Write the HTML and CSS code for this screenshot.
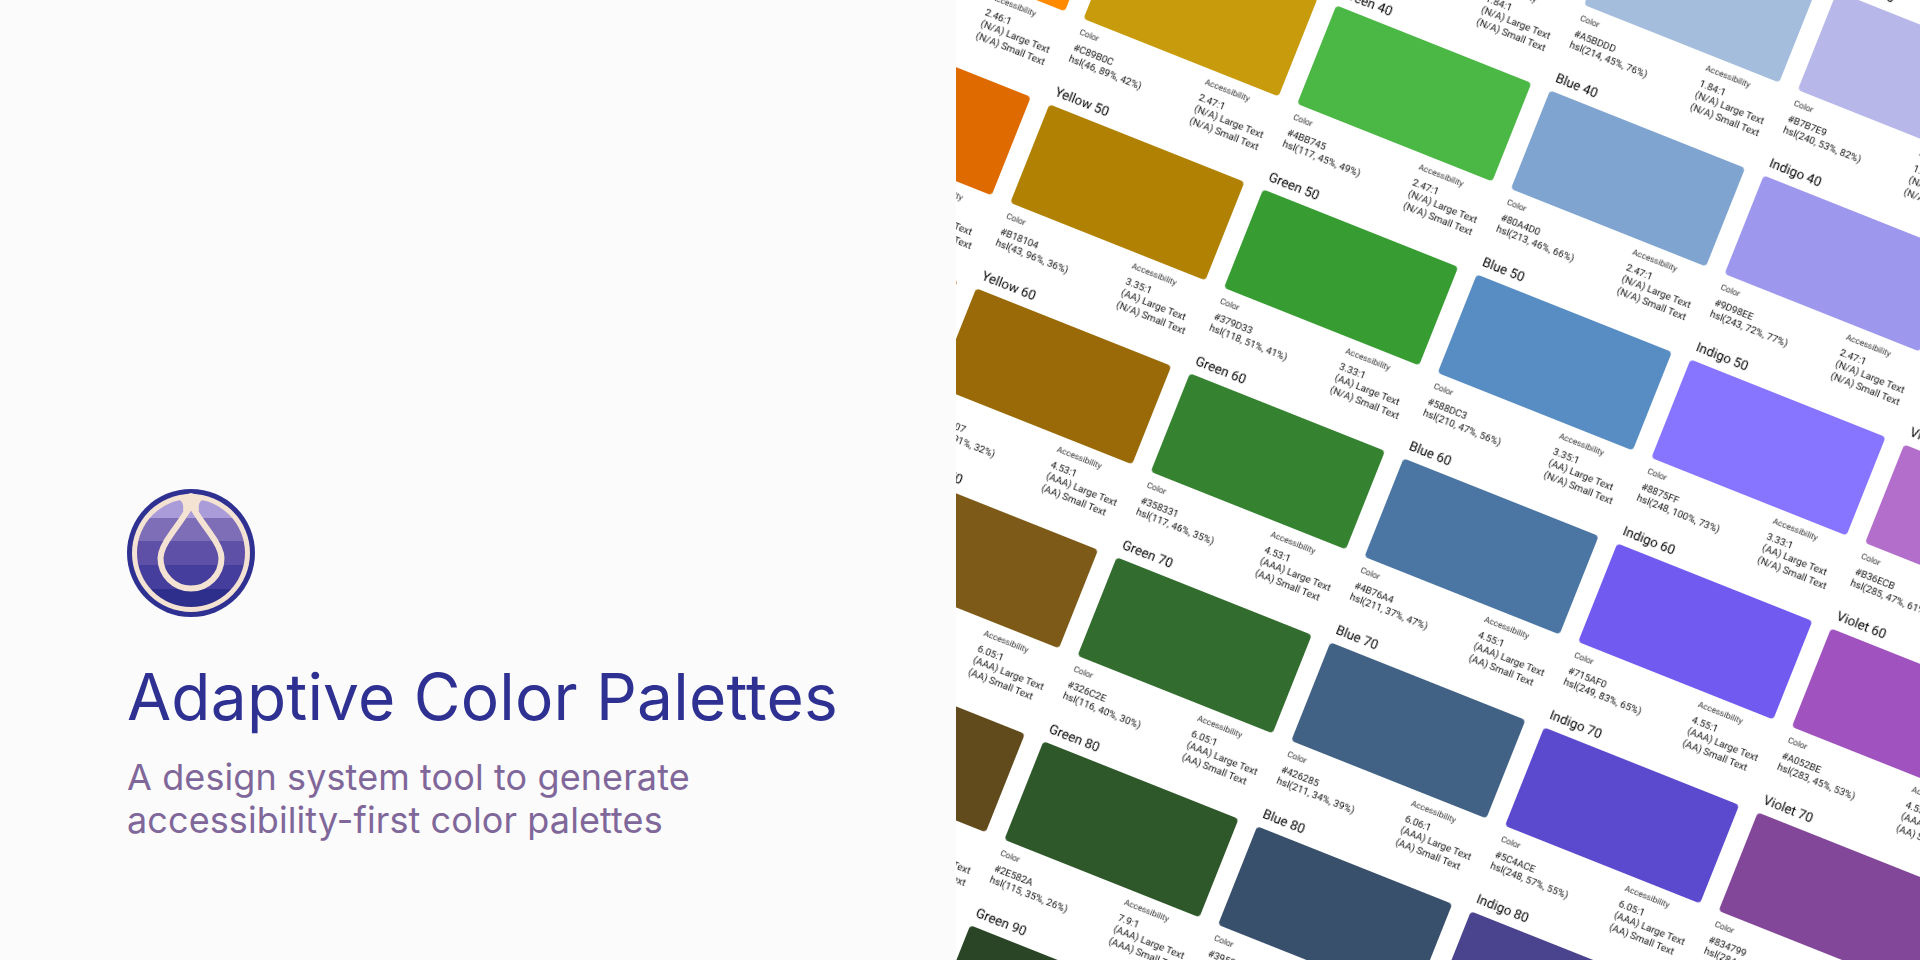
FILE: index.html
```html
<!DOCTYPE html>
<html lang="en">
<head>
<meta charset="utf-8">
<title>Adaptive Color Palettes</title>
<link rel="stylesheet" href="styles.css">
</head>
<body>
<main class="page">
  <section class="intro">
    <svg class="logo" viewBox="0 0 128 128" width="128" height="128" aria-hidden="true">
      <defs><clipPath id="disc"><circle cx="64" cy="64" r="54"/></clipPath></defs>
      <circle cx="64" cy="64" r="64" fill="#2E3192"/>
      <circle cx="64" cy="64" r="59" fill="#F4E3D3"/>
      <g clip-path="url(#disc)">
        <rect x="0" y="0" width="128" height="29" fill="#A99CD8"/>
        <rect x="0" y="29" width="128" height="23" fill="#7E6EB7"/>
        <rect x="0" y="52" width="128" height="24" fill="#5E50A6"/>
        <rect x="0" y="76" width="128" height="24" fill="#453E9C"/>
        <rect x="0" y="100" width="128" height="28" fill="#2E2E8C"/>
      </g>
      <path d="M64 15C60 24 52 34 45 44C37 55 33.5 62 33.5 69A30.5 30.5 0 0 0 94.5 69C94.5 62 91 55 83 44C76 34 68 24 64 15Z" fill="none" stroke="#F4E3D3" stroke-width="6" stroke-linejoin="round"/>
      <path d="M46 9C55 10 57 14 56 22L72 22C71 14 73 10 82 9L64 4Z" fill="#F4E3D3"/>
    </svg>
    <h1 class="title">Adaptive Color Palettes</h1>
    <p class="subtitle">A design system tool to generate<br>accessibility-first color palettes</p>
  </section>
  <section class="canvas">
    <div class="sheet">
      <!-- row 30 -->
      <div></div><div></div>
      <article class="card"><h3>Green 30</h3><div class="swatch" style="background:#79CB74"></div><div class="info"><p><span>Color</span>#79CB74<br>hsl(116, 46%, 63%)</p><p><span>Accessibility</span>1.84:1<br>(N/A) Large Text<br>(N/A) Small Text</p></div></article>
      <article class="card"><h3>Blue 30</h3><div class="swatch" style="background:#A5BDDD"></div><div class="info"><p><span>Color</span>#A5BDDD<br>hsl(214, 45%, 76%)</p><p><span>Accessibility</span>1.84:1<br>(N/A) Large Text<br>(N/A) Small Text</p></div></article>
      <article class="card"><h3>Indigo 30</h3><div class="swatch" style="background:#B7B7E9"></div><div class="info"><p><span>Color</span>#B7B7E9<br>hsl(240, 53%, 82%)</p><p><span>Accessibility</span>1.84:1<br>(N/A) Large Text<br>(N/A) Small Text</p></div></article>
      <div></div>
      <!-- row 40 -->
      <article class="card"><h3>Orange 40</h3><div class="swatch" style="background:#FF8A00"></div><div class="info"><p><span>Color</span>#FF8A00<br>hsl(32, 100%, 50%)</p><p><span>Accessibility</span>2.46:1<br>(N/A) Large Text<br>(N/A) Small Text</p></div></article>
      <article class="card"><h3>Yellow 40</h3><div class="swatch" style="background:#C89B0C"></div><div class="info"><p><span>Color</span>#C89B0C<br>hsl(46, 89%, 42%)</p><p><span>Accessibility</span>2.47:1<br>(N/A) Large Text<br>(N/A) Small Text</p></div></article>
      <article class="card"><h3>Green 40</h3><div class="swatch" style="background:#4BB745"></div><div class="info"><p><span>Color</span>#4BB745<br>hsl(117, 45%, 49%)</p><p><span>Accessibility</span>2.47:1<br>(N/A) Large Text<br>(N/A) Small Text</p></div></article>
      <article class="card"><h3>Blue 40</h3><div class="swatch" style="background:#80A4D0"></div><div class="info"><p><span>Color</span>#80A4D0<br>hsl(213, 46%, 66%)</p><p><span>Accessibility</span>2.47:1<br>(N/A) Large Text<br>(N/A) Small Text</p></div></article>
      <article class="card"><h3>Indigo 40</h3><div class="swatch" style="background:#9D98EE"></div><div class="info"><p><span>Color</span>#9D98EE<br>hsl(243, 72%, 77%)</p><p><span>Accessibility</span>2.47:1<br>(N/A) Large Text<br>(N/A) Small Text</p></div></article>
      <div></div>
      <!-- row 50 -->
      <article class="card"><h3>Orange 50</h3><div class="swatch" style="background:#DF6A00"></div><div class="info"><p><span>Color</span>#DF6A00<br>hsl(29, 100%, 44%)</p><p><span>Accessibility</span>3.35:1<br>(AA) Large Text<br>(N/A) Small Text</p></div></article>
      <article class="card"><h3>Yellow 50</h3><div class="swatch" style="background:#B18104"></div><div class="info"><p><span>Color</span>#B18104<br>hsl(43, 96%, 36%)</p><p><span>Accessibility</span>3.35:1<br>(AA) Large Text<br>(N/A) Small Text</p></div></article>
      <article class="card"><h3>Green 50</h3><div class="swatch" style="background:#379D33"></div><div class="info"><p><span>Color</span>#379D33<br>hsl(118, 51%, 41%)</p><p><span>Accessibility</span>3.33:1<br>(AA) Large Text<br>(N/A) Small Text</p></div></article>
      <article class="card"><h3>Blue 50</h3><div class="swatch" style="background:#588DC3"></div><div class="info"><p><span>Color</span>#588DC3<br>hsl(210, 47%, 56%)</p><p><span>Accessibility</span>3.35:1<br>(AA) Large Text<br>(N/A) Small Text</p></div></article>
      <article class="card"><h3>Indigo 50</h3><div class="swatch" style="background:#8875FF"></div><div class="info"><p><span>Color</span>#8875FF<br>hsl(248, 100%, 73%)</p><p><span>Accessibility</span>3.33:1<br>(AA) Large Text<br>(N/A) Small Text</p></div></article>
      <article class="card"><h3>Violet 50</h3><div class="swatch" style="background:#B36ECB"></div><div class="info"><p><span>Color</span>#B36ECB<br>hsl(285, 47%, 61%)</p><p><span>Accessibility</span>3.33:1<br>(AA) Large Text<br>(N/A) Small Text</p></div></article>
      <!-- row 60 -->
      <article class="card"><h3>Orange 60</h3><div class="swatch" style="background:#C25700"></div><div class="info"><p><span>Color</span>#C25700<br>hsl(27, 100%, 38%)</p><p><span>Accessibility</span>4.53:1<br>(AAA) Large Text<br>(AA) Small Text</p></div></article>
      <article class="card"><h3>Yellow 60</h3><div class="swatch" style="background:#996A07"></div><div class="info"><p><span>Color</span>#996A07<br>hsl(41, 91%, 32%)</p><p><span>Accessibility</span>4.53:1<br>(AAA) Large Text<br>(AA) Small Text</p></div></article>
      <article class="card"><h3>Green 60</h3><div class="swatch" style="background:#358331"></div><div class="info"><p><span>Color</span>#358331<br>hsl(117, 46%, 35%)</p><p><span>Accessibility</span>4.53:1<br>(AAA) Large Text<br>(AA) Small Text</p></div></article>
      <article class="card"><h3>Blue 60</h3><div class="swatch" style="background:#4B76A4"></div><div class="info"><p><span>Color</span>#4B76A4<br>hsl(211, 37%, 47%)</p><p><span>Accessibility</span>4.55:1<br>(AAA) Large Text<br>(AA) Small Text</p></div></article>
      <article class="card"><h3>Indigo 60</h3><div class="swatch" style="background:#715AF0"></div><div class="info"><p><span>Color</span>#715AF0<br>hsl(249, 83%, 65%)</p><p><span>Accessibility</span>4.55:1<br>(AAA) Large Text<br>(AA) Small Text</p></div></article>
      <article class="card"><h3>Violet 60</h3><div class="swatch" style="background:#A052BE"></div><div class="info"><p><span>Color</span>#A052BE<br>hsl(283, 45%, 53%)</p><p><span>Accessibility</span>4.55:1<br>(AAA) Large Text<br>(AA) Small Text</p></div></article>
      <!-- row 70 -->
      <div></div>
      <article class="card"><h3>Yellow 70</h3><div class="swatch" style="background:#7D5A17"></div><div class="info"><p><span>Color</span>#7D5A17<br>hsl(40, 69%, 29%)</p><p><span>Accessibility</span>6.05:1<br>(AAA) Large Text<br>(AA) Small Text</p></div></article>
      <article class="card"><h3>Green 70</h3><div class="swatch" style="background:#326C2E"></div><div class="info"><p><span>Color</span>#326C2E<br>hsl(116, 40%, 30%)</p><p><span>Accessibility</span>6.05:1<br>(AAA) Large Text<br>(AA) Small Text</p></div></article>
      <article class="card"><h3>Blue 70</h3><div class="swatch" style="background:#426285"></div><div class="info"><p><span>Color</span>#426285<br>hsl(211, 34%, 39%)</p><p><span>Accessibility</span>6.06:1<br>(AAA) Large Text<br>(AA) Small Text</p></div></article>
      <article class="card"><h3>Indigo 70</h3><div class="swatch" style="background:#5C4ACE"></div><div class="info"><p><span>Color</span>#5C4ACE<br>hsl(248, 57%, 55%)</p><p><span>Accessibility</span>6.05:1<br>(AAA) Large Text<br>(AA) Small Text</p></div></article>
      <article class="card"><h3>Violet 70</h3><div class="swatch" style="background:#834799"></div><div class="info"><p><span>Color</span>#834799<br>hsl(284, 37%, 44%)</p><p><span>Accessibility</span>6.05:1<br>(AAA) Large Text<br>(AA) Small Text</p></div></article>
      <!-- row 80 -->
      <div></div>
      <article class="card"><h3>Yellow 80</h3><div class="swatch" style="background:#614A1C"></div><div class="info"><p><span>Color</span>#614A1C<br>hsl(40, 55%, 25%)</p><p><span>Accessibility</span>7.9:1<br>(AAA) Large Text<br>(AAA) Small Text</p></div></article>
      <article class="card"><h3>Green 80</h3><div class="swatch" style="background:#2E582A"></div><div class="info"><p><span>Color</span>#2E582A<br>hsl(115, 35%, 26%)</p><p><span>Accessibility</span>7.9:1<br>(AAA) Large Text<br>(AAA) Small Text</p></div></article>
      <article class="card"><h3>Blue 80</h3><div class="swatch" style="background:#39506C"></div><div class="info"><p><span>Color</span>#39506C<br>hsl(213, 31%, 32%)</p><p><span>Accessibility</span>7.9:1<br>(AAA) Large Text<br>(AAA) Small Text</p></div></article>
      <article class="card"><h3>Indigo 80</h3><div class="swatch" style="background:#4A438E"></div><div class="info"><p><span>Color</span>#4A438E<br>hsl(245, 36%, 41%)</p><p><span>Accessibility</span>7.9:1<br>(AAA) Large Text<br>(AAA) Small Text</p></div></article>
      <div></div>
      <!-- row 90 -->
      <div></div><div></div>
      <article class="card"><h3>Green 90</h3><div class="swatch" style="background:#2A4426"></div></article>
    </div>
  </section>
</main>
</body>
</html>
```

FILE: styles.css
```css
* { box-sizing: border-box; }
html, body { margin: 0; height: 100%; overflow: hidden; }
.page { display: flex; width: 1920px; height: 960px; background: #fff; }
.intro {
  width: 956px;
  flex: none;
  background: #fbfbfb;
  padding: 489px 0 0 127px;
  font-family: Inter, "Noto Sans", sans-serif;
}
.logo { display: block; }
.title {
  margin: 38px 0 0;
  font-size: 64px;
  line-height: 84px;
  font-weight: 400;
  letter-spacing: 0.2px;
  color: #2e3192;
  white-space: nowrap;
}
.subtitle {
  margin: 17px 0 0;
  font-size: 36px;
  line-height: 43px;
  font-weight: 400;
  letter-spacing: 0.1px;
  color: #80679a;
  white-space: nowrap;
}
.canvas { position: relative; flex: 1; overflow: hidden; background: #fff; }
.sheet {
  position: absolute;
  left: 35px;
  top: -371px;
  display: grid;
  grid-template-columns: repeat(6, 230px);
  grid-auto-rows: 198px;
  transform: rotate(21.7deg);
  transform-origin: 0 0;
  will-change: transform;
  font-family: Roboto, "Liberation Sans", sans-serif;
  text-rendering: geometricPrecision;
  color: #111;
}
.card { width: 210px; }
.card h3 {
  margin: 0;
  height: 24px;
  padding-left: 1px;
  font-size: 13.3px;
  line-height: 21.5px;
  font-weight: 400;
  color: #000;
}
.swatch { height: 106px; border-radius: 4px; }
.info { display: flex; padding: 7.5px 0 0 1.5px; }
.info p {
  margin: 0;
  font-size: 10px;
  line-height: 12.6px;
  white-space: nowrap;
}
.info p:first-child { width: 138.5px; }
.info span { display: block; font-size: 8.5px; line-height: 12px; margin-bottom: 5px; color: #333; }
```
